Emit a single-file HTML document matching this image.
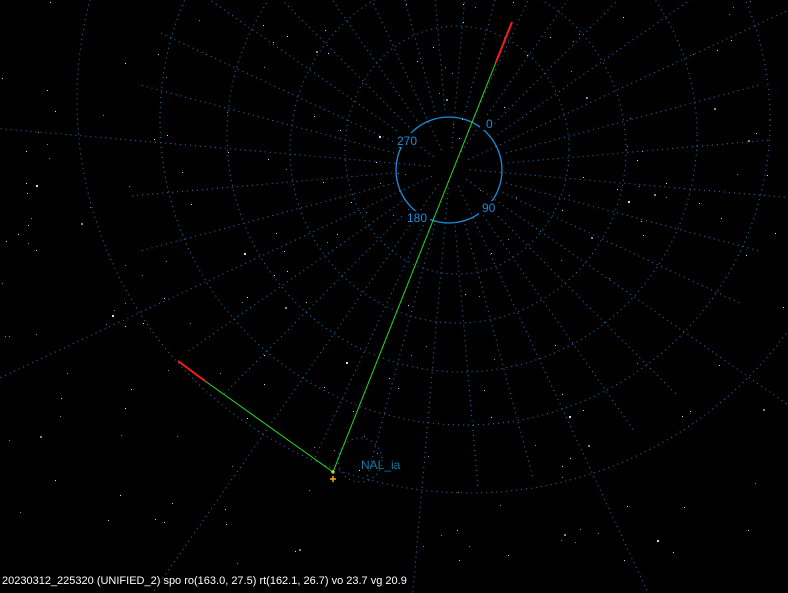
<!DOCTYPE html>
<html><head><meta charset="utf-8"><style>
html,body{margin:0;padding:0;background:#000;width:788px;height:593px;overflow:hidden;position:relative}
svg{position:absolute;left:0;top:0;overflow:hidden}
.t{position:absolute;font-family:"Liberation Sans",sans-serif;font-size:12px;white-space:nowrap;line-height:14px}
</style></head><body>
<svg id="s" width="788" height="593" viewBox="0 0 788 593">
<g id="stars"></g>
<g id="grid" fill="none" stroke="#1680c8" stroke-width="1" stroke-dasharray="1 4">
<ellipse cx="457" cy="150" rx="112" ry="124"/>
<ellipse cx="458" cy="150" rx="168" ry="173"/>
<ellipse cx="462" cy="135" rx="235" ry="237"/>
<circle cx="465" cy="120" r="305"/>
<circle cx="470" cy="100" r="393"/>
<circle cx="360" cy="460" r="22"/>
</g>
<circle cx="449" cy="170" r="53" fill="none" stroke="#1a8ee0" stroke-width="1.3"/>
<rect x="394" y="133" width="26" height="14" fill="#000"/>
<rect x="480" y="116" width="14" height="14" fill="#000"/>
<rect x="404" y="211" width="26" height="14" fill="#000"/>
<rect x="479" y="201" width="18" height="14" fill="#000"/>
<line x1="333" y1="472" x2="496" y2="62" stroke="#22dd22" stroke-width="1"/>
<line x1="496" y1="62" x2="512" y2="22" stroke="#ff1a1a" stroke-width="2"/>
<line x1="333" y1="472" x2="205" y2="381" stroke="#22dd22" stroke-width="1"/>
<line x1="205" y1="381" x2="178" y2="361" stroke="#ff1a1a" stroke-width="2"/>
<path d="M330 479h6M333 476v6" stroke="#ffa500" stroke-width="1.5"/>
<path d="M331 472h4M333 470v4" stroke="#ffff33" stroke-width="1"/>
</svg>
<div class="t" style="left:486px;top:117px;color:#1a8ee0">0</div>
<div class="t" style="left:397px;top:134px;color:#1a8ee0">270</div>
<div class="t" style="left:407px;top:211px;color:#1a8ee0">180</div>
<div class="t" style="left:482px;top:201px;color:#1a8ee0">90</div>
<div class="t" style="left:361px;top:458px;color:#0b7aa8">NAL_ia</div>
<div class="t" style="left:2px;top:574px;color:#fff;font-size:11px">20230312_225320 (UNIFIED_2) spo ro(163.0, 27.5) rt(162.1, 26.7) vo 23.7 vg 20.9</div>
<script>
var NS="http://www.w3.org/2000/svg",g=document.getElementById("grid"),st=document.getElementById("stars");
function L(x1,y1,x2,y2){var l=document.createElementNS(NS,"line");l.setAttribute("x1",x1);l.setAttribute("y1",y1);l.setAttribute("x2",x2);l.setAttribute("y2",y2);g.appendChild(l);}
var cx=450,cy=168;
for(var i=0;i<36;i++){var a=(i*10+5)*Math.PI/180;if(i%3==0){L(cx+Math.cos(a)*20,cy+Math.sin(a)*20,cx+Math.cos(a)*900,cy+Math.sin(a)*900);}else{L(cx+Math.cos(a)*58,cy+Math.sin(a)*58,cx+Math.cos(a)*320,cy+Math.sin(a)*320);}}
var sd=12345;function r(){sd=(sd*16807)%2147483647;return sd/2147483647;}
for(var i=0;i<220;i++){var c=document.createElementNS(NS,"rect");var s=r()<0.1?2:1;c.setAttribute("x",Math.floor(r()*788));c.setAttribute("y",Math.floor(r()*570));c.setAttribute("width",s);c.setAttribute("height",s);c.setAttribute("fill",r()<0.5?"#ddd":"#888");st.appendChild(c);}
</script>
</body></html>
